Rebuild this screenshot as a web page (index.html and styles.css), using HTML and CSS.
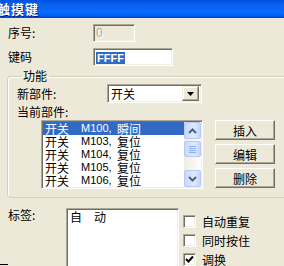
FILE: index.html
```html
<!DOCTYPE html>
<html lang="zh-CN">
<head>
    <meta charset="UTF-8">
    <title>触摸键</title>
    <link rel="stylesheet" href="styles.css">
</head>
<body>
    <div class="window">
        <div class="titlebar"><span class="title">触摸键</span></div>
        <div class="content">
            <div class="field">
                <label class="label">序号:</label>
                <div class="edit disabled">0</div>
            </div>
            <div class="field">
                <label class="label">键码</label>
                <div class="edit code"><span class="selected-text">FFFF</span></div>
            </div>

            <fieldset class="group">
                <legend>功能</legend>
                <div class="field sub">
                    <label class="label">新部件:</label>
                    <div class="combo">
                        <span class="combo-text">开关</span>
                        <span class="drop">
                            <svg width="7" height="4" viewBox="0 0 7 4"><path d="M0 0H7L3.5 4Z" fill="#000"/></svg>
                        </span>
                    </div>
                </div>
                <div class="cur-label">当前部件:</div>
                <div class="list-row">
                    <div class="listbox">
                        <div class="items">
                            <div class="item active"><span>开关</span><span class="code">M100,</span><span>瞬间</span></div>
                            <div class="item"><span>开关</span><span class="code">M103,</span><span>复位</span></div>
                            <div class="item"><span>开关</span><span class="code">M104,</span><span>复位</span></div>
                            <div class="item"><span>开关</span><span class="code">M105,</span><span>复位</span></div>
                            <div class="item"><span>开关</span><span class="code">M106,</span><span>复位</span></div>
                            <div class="item"><span>开关</span><span class="code">M107,</span><span>复位</span></div>
                        </div>
                        <div class="scrollbar">
                            <div class="sb-btn">
                                <svg width="9" height="6" viewBox="0 0 9 6"><path d="M1 5L4.5 1.5L8 5" fill="none" stroke="#4D6185" stroke-width="2"/></svg>
                            </div>
                            <div class="sb-thumb">
                                <svg width="7" height="7" viewBox="0 0 7 7"><path d="M0 0.5H7M0 2.5H7M0 4.5H7M0 6.5H7" stroke="#8CB0F8" stroke-width="1"/></svg>
                            </div>
                            <div class="sb-track"></div>
                            <div class="sb-btn">
                                <svg width="9" height="6" viewBox="0 0 9 6"><path d="M1 1L4.5 4.5L8 1" fill="none" stroke="#4D6185" stroke-width="2"/></svg>
                            </div>
                        </div>
                    </div>
                    <div class="buttons">
                        <button class="btn">插入</button>
                        <button class="btn">编辑</button>
                        <button class="btn">删除</button>
                    </div>
                </div>
            </fieldset>

            <div class="bottom">
                <div class="tag-col">
                    <label class="label">标签:</label>
                    <span class="stub"></span>
                </div>
                <div class="memo">自　动</div>
                <div class="checks">
                    <div class="check"><span class="box"></span><span>自动重复</span></div>
                    <div class="check"><span class="box"></span><span>同时按住</span></div>
                    <div class="check"><span class="box">
                        <svg width="9" height="9" viewBox="0 0 9 9"><path d="M1 4L3.5 6.5L8 1.5" fill="none" stroke="#000" stroke-width="2"/></svg>
                    </span><span>调换</span></div>
                </div>
            </div>
        </div>
    </div>
</body>
</html>
```

FILE: styles.css
```css
* {
    margin: 0;
    padding: 0;
    box-sizing: border-box;
}
body {
    font-family: "Noto Sans CJK SC", "Liberation Sans", sans-serif;
    font-size: 12px;
    color: #000;
    background-color: #ECE9D8;
    overflow: hidden;
}
.window {
    width: 284px;
    height: 266px;
    overflow: hidden;
    background-color: #ECE9D8;
}
.titlebar {
    height: 18px;
    background: linear-gradient(#0050DC 0%, #0862EE 25%, #0A6CFF 70%, #0062F4 85%, #003FD2 100%);
    overflow: hidden;
}
.title {
    display: block;
    margin-left: -3px;
    font-size: 13px;
    font-weight: 700;
    line-height: 17px;
    color: #FFFFFF;
    text-shadow: 1px 1px 0 #0A1883;
    letter-spacing: 1px;
}
.content {
    padding-left: 7px;
}
.field {
    display: flex;
    align-items: center;
    height: 18px;
    margin-top: 6px;
}
.label {
    width: 86px;
    padding-left: 1px;
    line-height: 14px;
}
.edit {
    height: 18px;
    background-color: #FFFFFF;
    border: 1px solid;
    border-color: #ACA899 #FFFFFF #FFFFFF #ACA899;
    box-shadow: inset 1px 1px 0 #716F64, inset -1px -1px 0 #F1EFE2;
    padding: 1px 2px;
    line-height: 14px;
}
.edit.disabled {
    width: 42px;
    background-color: #ECE9D8;
    color: #ACA899;
    text-shadow: 1px 1px 0 #FFFFFF;
    font-family: "Liberation Sans", sans-serif;
    font-size: 12px;
}
.edit.code {
    width: 80px;
}
.selected-text {
    display: inline-block;
    background-color: #316AC5;
    color: #FFFFFF;
    font-family: "Liberation Sans", sans-serif;
    font-weight: 700;
    font-size: 11px;
    line-height: 12px;
    padding: 0 1px;
    margin-top: 1px;
}

/* group box */
.group {
    margin-top: 3px;
    margin-right: -12px;
    border: 1px solid #D0D0BF;
    box-shadow: inset 1px 1px 0 #FFFFFF;
    border-radius: 3px;
    padding: 0 0 8px 9px;
}
.group legend {
    margin-left: 4px;
    padding: 0 2px;
    line-height: 14px;
    height: 14px;
}
.field.sub {
    height: 19px;
    margin-top: 1px;
}
.field.sub .label {
    width: 90px;
    padding-left: 0;
}
.combo {
    display: flex;
    align-items: center;
    justify-content: space-between;
    width: 95px;
    height: 19px;
    background-color: #FFFFFF;
    border: 1px solid;
    border-color: #ACA899 #FFFFFF #FFFFFF #ACA899;
    box-shadow: inset 1px 1px 0 #716F64, inset -1px -1px 0 #F1EFE2;
    padding: 2px 2px 2px 3px;
}
.combo-text {
    line-height: 14px;
}
.drop {
    display: flex;
    align-items: center;
    justify-content: center;
    width: 17px;
    height: 15px;
    background-color: #ECE9D8;
    border: 1px solid;
    border-color: #F1EFE2 #716F64 #716F64 #F1EFE2;
    box-shadow: inset -1px -1px 0 #ACA899, inset 1px 1px 0 #FFFFFF;
}
.cur-label {
    height: 16px;
    line-height: 16px;
    margin-top: 1px;
}
.list-row {
    display: flex;
    align-items: flex-start;
}
.listbox {
    display: flex;
    width: 162px;
    height: 69px;
    margin-left: 24px;
    background-color: #FFFFFF;
    border: 1px solid;
    border-color: #ACA899 #FFFFFF #FFFFFF #ACA899;
    box-shadow: inset 1px 1px 0 #716F64, inset -1px -1px 0 #F1EFE2;
    padding: 1px;
    overflow: hidden;
}
.items {
    width: 141px;
    overflow: hidden;
}
.item {
    display: grid;
    grid-template-columns: 36px 36px auto;
    height: 13px;
    line-height: 13px;
    padding-left: 2px;
    white-space: nowrap;
}
.item.active {
    background-color: #316AC5;
    color: #FFFFFF;
}
.item .code {
    font-family: "Liberation Sans", sans-serif;
    font-size: 11px;
}
.scrollbar {
    display: flex;
    flex-direction: column;
    width: 17px;
    background: linear-gradient(90deg, #EEEDE5, #FEFEFB);
}
.sb-btn, .sb-thumb {
    display: flex;
    align-items: center;
    justify-content: center;
    height: 17px;
    border: 1px solid #B7CAF5;
    border-radius: 2px;
    background: linear-gradient(90deg, #C8D8FD, #E1EAFE 60%, #C3D5FD);
}
.sb-thumb {
    height: 16px;
    margin-top: 2px;
}
.sb-track {
    flex-grow: 1;
}
.buttons {
    display: flex;
    flex-direction: column;
    gap: 4px;
    margin-left: 12px;
}
.btn {
    width: 60px;
    height: 20px;
    font-family: inherit;
    font-size: 12px;
    color: #000;
    background-color: #ECE9D8;
    border: 1px solid;
    border-color: #FFFFFF #716F64 #716F64 #FFFFFF;
    box-shadow: inset -1px -1px 0 #ACA899;
}

/* bottom part */
.bottom {
    display: flex;
    margin-top: 10px;
}
.tag-col {
    display: flex;
    flex-direction: column;
    width: 59px;
}
.tag-col .label {
    width: auto;
}
.stub {
    display: block;
    width: 8px;
    height: 1px;
    margin-left: -7px;
    margin-top: 42px;
    background-color: #000;
}
.memo {
    width: 113px;
    height: 70px;
    background-color: #FFFFFF;
    border: 1px solid;
    border-color: #ACA899 #FFFFFF #FFFFFF #ACA899;
    box-shadow: inset 1px 1px 0 #716F64, inset -1px -1px 0 #F1EFE2;
    padding: 1px 3px;
    line-height: 14px;
    white-space: pre;
}
.checks {
    margin-left: 4px;
    padding-top: 7px;
}
.check {
    display: flex;
    align-items: center;
    gap: 6px;
    height: 13px;
    margin-bottom: 6px;
    line-height: 13px;
}
.box {
    display: flex;
    align-items: center;
    justify-content: center;
    width: 13px;
    height: 13px;
    background-color: #FFFFFF;
    border: 1px solid;
    border-color: #ACA899 #FFFFFF #FFFFFF #ACA899;
    box-shadow: inset 1px 1px 0 #716F64, inset -1px -1px 0 #F1EFE2;
}
```
